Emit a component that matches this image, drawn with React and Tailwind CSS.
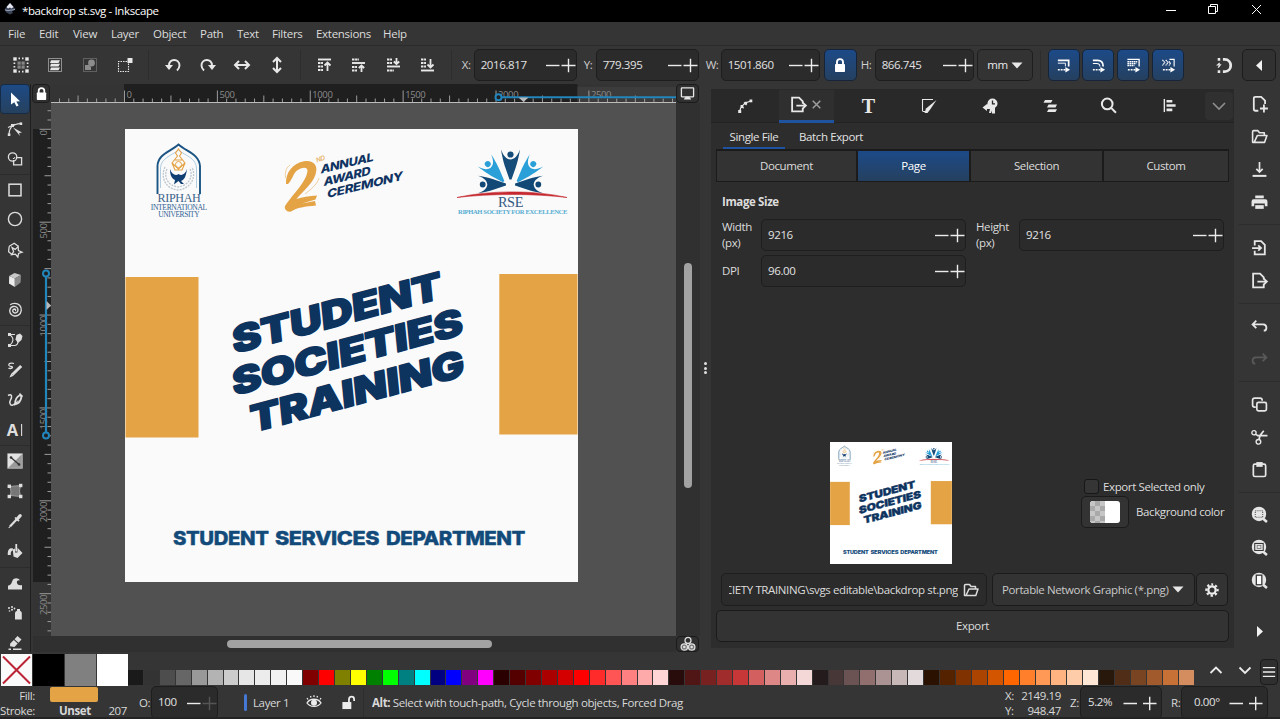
import React from "react";

/* ---------- icon helper ---------- */
function G({ s = 16, w = 1.5, className = "", children }) {
  return (
    <svg width={s} height={s} viewBox="0 0 16 16" fill="none" stroke="currentColor" strokeWidth={w} className={"shrink-0 overflow-visible " + className}>
      {children}
    </svg>
  );
}
const F = { fill: "currentColor", stroke: "none" };

/* ---------- toolbox icons ---------- */
const tools = {
  select: <G><path {...F} d="M4 1.500 13 10.200 9.300 10.400 11.600 14.600 9.500 15.600 7.300 11.300 4 13.600z" /></G>,
  node: <G w={1.1}><path d="M2 13.500C2 7 5 3 13.500 2.500M1 6.500 8 3.200" /><rect x="4" y="3" width="3" height="3" {...F} /><rect x="12.600" y="1.400" width="2.600" height="2.600" {...F} /><rect x=".8" y="12.400" width="2.600" height="2.600" {...F} /><path {...F} d="M6 6.500 15 11.500 12 12 13 15z" /></G>,
  shapes: <G w={1.3}><circle cx="5.600" cy="6" r="4.200" /><path d="M9.800 6.600H14.600V13.800H6.600V10" /><path strokeDasharray="1 1" d="M6.600 10V6.600H9.800" /></G>,
  rect: <G w={1.500}><rect x="2" y="2.200" width="12" height="11.600" /></G>,
  circle: <G w={1.400}><circle cx="8" cy="8" r="6.600" /></G>,
  star: <G w={1.300}><path d="M2.200 4.200 7.200 1.200 11.600 4.600M2.200 4.200 1.600 9.800 5.600 13M5 5.500 8.200 7.400 11.200 4.600 11.400 8.600 15 10.200 11.600 11.400 10.800 15 8.400 12.200 4.600 12.600 6.600 9.600z" /></G>,
  box: <G><path fill="#ececec" stroke="none" d="M2.200 4 7.800 6.400V15L2 11.600z" /><path fill="#c8c8c8" stroke="none" d="M7.500 1 14 3 7.800 6.400 2.200 4z" /><path fill="#8a8a8a" stroke="none" d="M14 3 13.600 10.500 7.800 15V6.400z" /></G>,
  spiral: <G w={1.400}><path d="M8 8.600c.8 0 1-1.500-.4-1.600C5.600 7 5.200 9.200 6.400 10.300 8.200 11.900 11 10.600 11 8 11 5.200 8.400 3.900 6 4.500 3.200 5.200 2 8.400 3.200 11 4.600 14 8.400 14.900 11.400 13.200 14.800 11.200 15.200 6 12.600 3.300 10 .8 5.600.8 3.200 2.800" /></G>,
  pencilPath: <G w={1.100}><path d="M2.500 2.500H8M2.500 2.500C8 6 6 11 2.500 13.500H8C11 13 11 11 11 9" /><rect x="1" y="1" width="3" height="3" {...F} /><rect x="1" y="12" width="3" height="3" {...F} /><path {...F} d="M9.500 3 13 1.500 15.500 4 14.500 8 11 11 8.500 7.500z" /></G>,
  pencil: <G w={1.300}><path d="M7 1.500C4 .5 1 1.500 2 3.500 3 5 5.500 4 5.500 5.500 5 7 2 6.500 1.500 6" /><path d="M5.500 12.500 14.200 4" strokeWidth="3" /><path {...F} d="M4.300 11.300 6.700 13.700 2.500 15.500z" /></G>,
  calligraphy: <G w={1.500}><path d="M1 3.500C3.500 2 5 3 4.500 5.500 4 8 2 9 3 11.500 4 14.500 6.500 13 8 11.500" /><path d="M8 12.500C8 8 10 4.500 13 3L14.500 4.500C14 8 12 11.500 8 12.500z" strokeWidth="1.800" /><path d="M8 12.500 11 8.500" strokeWidth="1" /><path d="M12.500 1.500 15.500 4.500" strokeWidth="1.600" /></G>,
  text: <G><path d="M14.600 2V14" strokeWidth="1.100" /><text x="-.2" y="13.700" fontSize="16.500" fontWeight="700" fontFamily="Open Sans, sans-serif" {...F}>A</text></G>,
  gradient: <G w={1}><rect x=".8" y=".8" width="14.400" height="14.400" fill="#9a9a9a" stroke="#b5b5b5" /><path fill="#e2e2e2" stroke="none" d="M1 1H15L1 15z" /><path stroke="#333" strokeWidth="1.300" d="M4 4.500 12 11.500" /><circle cx="4" cy="4.500" r="1.300" fill="#333" stroke="none" /><circle cx="12" cy="11.500" r="1.300" fill="#333" stroke="none" /></G>,
  mesh: <G w={1}><path fill="#777" d="M2.500 3.500 13.500 2.500 12.500 8 13.500 13.500 3.500 12.500 4 8z" stroke="#9a9a9a" /><g {...F}><rect x=".6" y="1.600" width="3.400" height="3.400" /><rect x="12" y=".8" width="3.400" height="3.400" /><rect x="12" y="11.800" width="3.400" height="3.400" /><rect x=".6" y="11.800" width="3.400" height="3.400" /></g></G>,
  dropper: <G w={2}><path d="M3 13.500 9.500 6.500" strokeWidth="2.200" /><path d="M8 4.500 12 8.200" strokeWidth="1.600" /><path d="M10.200 6 13.200 2.600" strokeWidth="3.200" strokeLinecap="round" /><path d="M1.800 15 3 13.500" strokeWidth="1.200" /></G>,
  bucket: <G w={1.300}><path {...F} d="M5.800 6.500 8 5.500V9.500H10.500V4.800L15.500 10 10.500 15 6.500 13.500z" /><path d="M9.250 8.500V1" strokeWidth="1.800" /><path {...F} d="M6 5.500C2.500 4.500.5 6.500.8 12H3.800C3.500 9.500 4 8 5.800 7.500z" /></G>,
  tweak: <G><path {...F} d="M1 14.500V10.500C4 10.500 4.500 8 5.500 5.500 6.800 2.800 11 2.300 13.200 5.500 11 4.800 9.400 6 10 8 10.500 10 12.500 10.500 15 10V14.500z" /></G>,
  spray: <G><g {...F}><path d="M8 8Q8 6.500 10 5.800V4H13V5.800Q14.800 6.500 14.800 8V14.500H8z" /><circle cx="2" cy="3" r="1" /><circle cx="5" cy="2" r="1" /><circle cx="5" cy="4.800" r="1" /><circle cx="2.500" cy="6" r=".8" /><circle cx="7.500" cy="3.500" r=".9" /></g></G>,
  eraser: <G w={1.200}><path {...F} d="M10.500 1 14.500 4.500 11.500 7.800 7.500 4.200zM6.800 5 10.700 8.600 7.500 12 3 11.200 3.200 8.500z" /><path d="M1.500 14.200H4M6 14.200H14.500" strokeWidth="1.500" /></G>,
};
const toolGroups = [
  ["select", "node", "shapes"],
  ["rect", "circle", "star", "box", "spiral"],
  ["pencilPath", "pencil", "calligraphy", "text"],
  ["gradient", "mesh", "dropper", "bucket"],
  ["tweak", "spray", "eraser"],
];

function Toolbox() {
  return (
    <div className="flex h-[568px] w-[31px] shrink-0 flex-col border-r border-[#1f1f1f] text-[#dedede]">
      {toolGroups.map((g, i) => (
        <div key={i} className={i > 2 ? "border-t border-[#2c2c2c]" : ""}>
          {g.map((t, j) => (
            <div
              key={t}
              className={
                "flex h-[30.1px] items-center justify-center " +
                (t === "select" ? "rounded-[4px] border border-[#152c49] bg-gradient-to-b from-[#1d4a85] to-[#26415f] text-white" : j === 0 && i < 3 ? "border-t border-[#2c2c2c]" : "")
              }
            >
              {tools[t]}
            </div>
          ))}
        </div>
      ))}
    </div>
  );
}

/* ---------- top tool controls ---------- */
function Spin({ value, cls, faded }) {
  return (
    <div className={"flex shrink-0 items-center rounded-[5px] border border-[#1e1e1e] bg-[#2b2b2b] text-[#e2e2e2] " + cls}>
      <span className="flex-1 whitespace-nowrap pb-px pl-[6px]">{value}</span>
      <svg width="31" height="16" viewBox="0 0 31 16" stroke="#ececec" strokeWidth="1.400" className="shrink-0">
        <path d="M1 8.500H14.500" />
        <path d="M16.500 8.500H30.500M23.500 1.800V15.200" stroke={faded ? "#555" : "#ececec"} />
      </svg>
    </div>
  );
}
function WideSpin({ value, cls }) {
  return (
    <div className={"flex shrink-0 items-center rounded-[5px] border border-[#1e1e1e] bg-[#2b2b2b] pr-[3px] text-[#e2e2e2] " + cls}>
      <span className="flex-1 whitespace-nowrap pb-px pl-[7px]">{value}</span>
      <svg width="36" height="16" viewBox="0 0 36 16" stroke="#ececec" strokeWidth="1.400" className="shrink-0">
        <path d="M1.500 8.500H15M21 8.500H34.500M27.700 1.800V15.200" />
      </svg>
    </div>
  );
}
function Sep({ cls }) {
  return <div className={"h-[30px] w-px shrink-0 bg-[#2d2d2d] " + cls} />;
}
function Cell({ cls = "w-[34.6px]", children }) {
  return <div className={"flex shrink-0 items-center justify-center " + cls}>{children}</div>;
}
const Lines = ({ y, dash }) => <path strokeWidth="1.900" strokeDasharray={dash} d={y} />;

function BlueBtn({ children, cls = "w-[32px]" }) {
  return (
    <div className={"flex h-[32px] shrink-0 items-center justify-center rounded-[5px] border border-[#16243a] bg-gradient-to-b from-[#1c4a88] to-[#25405f] text-white " + cls}>
      {children}
    </div>
  );
}
const LockShape = ({ s = 16 }) => (
  <G s={s} w={1.900}><path d="M5 8V5C5 1.200 11 1.200 11 5V8" /><rect x="3" y="7" width="10" height="8" rx=".8" {...F} /></G>
);

function ToolControls() {
  return (
    <div className="flex h-[39px] shrink-0 items-center border-t border-[#2b2b2b] pl-[3.500px] text-[#e8e8e8]">
      <Cell><G w={1.600}><g strokeWidth="1.700"><path d="M5.500 1.400H7M9 1.400H10.500M5.500 14.600H7M9 14.600H10.500M1.400 5.500V7M1.400 9V10.500M14.600 5.500V7M14.600 9V10.500" /></g><g {...F}><rect x=".3" y=".3" width="3.400" height="3.400" /><rect x="12.300" y=".3" width="3.400" height="3.400" /><rect x=".3" y="12.300" width="3.400" height="3.400" /><rect x="12.300" y="12.300" width="3.400" height="3.400" /></g><g fill="#858585" stroke="none"><rect x="4.500" y="4.500" width="3.200" height="3.200" /><rect x="8.500" y="4.500" width="3.200" height="3.200" /><rect x="4.500" y="8.500" width="3.200" height="3.200" /><rect x="8.500" y="8.500" width="3.200" height="3.200" /></g></G></Cell>
      <Cell><G w={1}><rect x="1.500" y="1.500" width="13" height="13" strokeDasharray="1 1" /><path {...F} d="M4 3.200H13L11.500 6H3zM4 6.800H13L11.500 9.600H3zM4 10.400H13L11.500 13.200H3z" /></G></Cell>
      <Cell><G w={1} className="text-[#8c8c8c]"><rect x="1.500" y="1.500" width="13" height="13" strokeDasharray="1 1" /><circle cx="9.500" cy="6" r="3.400" {...F} /><path {...F} d="M3 8H7L9 10V13H3z" /></G></Cell>
      <Cell><G w={1.100}><path d="M10 4.500H1.500V14.500H11.500V6" strokeDasharray="1.500 1" /><rect x="10.500" y="1" width="5" height="5" {...F} /></G></Cell>
      <Sep cls="ml-[6px] mr-[7px]" />
      <Cell><G w={1.900}><path d="M4 8.500C4 .8 14.500 1.500 14.500 8.500 14.500 11 13 12.500 12 13.500" /><path {...F} d="M0 8H8L4 13z" /></G></Cell>
      <Cell><G w={1.900}><path d="M12 8.500C12 .8 1.500 1.500 1.500 8.500 1.500 11 3 12.500 4 13.500" /><path {...F} d="M16 8H8L12 13z" /></G></Cell>
      <Cell><G w={2}><path d="M2 8H14M5 4 1 8 5 12M11 4 15 8 11 12" /></G></Cell>
      <Cell><G w={2}><path d="M8 2V14M4 5 8 1 12 5M4 11 8 15 12 11" /></G></Cell>
      <Sep cls="ml-[6px] mr-[5px]" />
      <Cell><G><Lines y="M2 2.500H15" /><Lines y="M2 6H7M2 9.500H7M2 13H7" dash="2.500 .6" /><path d="M11.500 14V6M8.500 8.500 11.500 5.500 14.500 8.500" strokeWidth="1.800" /></G></Cell>
      <Cell><G><Lines y="M2 2.500H9M2 10H7M2 13.500H7" dash="2.500 .6" /><Lines y="M2 6H15" /><path d="M11.500 15V9M8.800 11 11.500 8.500 14.200 11" strokeWidth="1.800" /></G></Cell>
      <Cell><G><Lines y="M2 2.500H7M2 6H7M2 13.500H9" dash="2.500 .6" /><Lines y="M2 9.500H15" /><path d="M11.500 1V7M8.800 4.500 11.500 7 14.200 4.500" strokeWidth="1.800" /></G></Cell>
      <Cell><G><Lines y="M2 2.500H7M2 6H7M2 9.500H7" dash="2.500 .6" /><Lines y="M2 13.500H15" /><path d="M11.500 2V10M8.500 7.500 11.500 10.500 14.500 7.500" strokeWidth="1.800" /></G></Cell>
      <Sep cls="ml-[6px] mr-[10px]" />
      <span className="w-[12px] shrink-0 pb-px text-[#cfcfcf]">X:</span>
      <Spin cls="h-[32px] w-[103px]" value="2016.817" />
      <span className="ml-[7px] w-[12px] shrink-0 pb-px text-[#cfcfcf]">Y:</span>
      <Spin cls="h-[32px] w-[103px]" value="779.395" />
      <span className="ml-[7px] w-[15px] shrink-0 pb-px text-[#cfcfcf]">W:</span>
      <Spin cls="h-[32px] w-[99px]" value="1501.860" />
      <BlueBtn cls="ml-[4px] w-[33px]"><LockShape /></BlueBtn>
      <span className="ml-[4px] w-[14px] shrink-0 pb-px text-[#cfcfcf]">H:</span>
      <Spin cls="h-[32px] w-[99px]" value="866.745" />
      <div className="ml-[3px] flex h-[32px] w-[56px] shrink-0 items-center justify-center gap-[3px] rounded-[5px] border border-[#1e1e1e] bg-[#333] pl-px">
        <span className="pb-px">mm</span>
        <svg width="12" height="7"><path d="M.5.5H11.500L6 6.500z" fill="#e8e8e8" /></svg>
      </div>
      <Sep cls="ml-[7px] mr-[7px]" />
      <div className="flex gap-[2.800px]">
        <BlueBtn><G s={15} w={1.800}><path d="M2 2.500H13.500V9" /><path d="M2 5.500H10V9" strokeWidth="1" /><path d="M2 12.500H11" strokeDasharray="2 1" /><path {...F} d="M10 9.500 15 12.500 10 15.500z" /></G></BlueBtn>
        <BlueBtn><G s={15} w={1.800}><path d="M2 2.500H7C11 2.500 13 5 13 9" /><path d="M2 5.800H6C8 5.800 9.500 7 9.500 9" strokeWidth="1.200" /><path d="M2 12.500H11" strokeDasharray="2 1" /><path {...F} d="M10 9.500 15 12.500 10 15.500z" /></G></BlueBtn>
        <BlueBtn><G s={15} w={1.400}><path d="M1.500 1.500H14V9" /><path d="M1.500 4H12M1.500 6H11M1.500 8H9" strokeDasharray="1.800 .5" /><path d="M2 12.500H11" strokeDasharray="2 1" strokeWidth="1.800" /><path {...F} d="M10 9.500 15 12.500 10 15.500z" /></G></BlueBtn>
        <BlueBtn><G s={15} w={1.200}><path d="M9 1.500H14V9" /><path d="M1.500 2 4 4.800 1.500 8M5 2 7.500 4.800 5 8M8.500 3.500 10 5.500 8.500 8" strokeDasharray="1.800 .4" /><path d="M2 12.500H11" strokeDasharray="2 1" strokeWidth="1.800" /><path {...F} d="M10 9.500 15 12.500 10 15.500z" /></G></BlueBtn>
      </div>
      <div className="ml-[32px] flex w-[16px] shrink-0 items-center"><G s={17} w={2.600}><path d="M6.500 2.300H8C15.800 2.300 15.800 13.700 8 13.700H6.500" /><path d="M4 2.300H1.600M4 13.700H1.600" /><path d="M3.500 5.500 1.500 7.500H4L2 10" strokeWidth="1.200" /></G></div>
      <div className="ml-[10px] flex h-[32px] w-[34px] shrink-0 items-center justify-center rounded-[5px] border border-[#1c1c1c] bg-[#313131]">
        <svg width="6" height="11"><path d="M6 0V11L0 5.500z" fill="#f2f2f2" /></svg>
      </div>
    </div>
  );
}

/* ---------- artwork ---------- */
function Figure({ x, y, r, c, k = 1 }) {
  return (
    <g transform={`translate(${x} ${y}) rotate(${r}) scale(${k})`} fill={c}>
      <circle cx="0" cy="-24" r="3.100" />
      <path d="M-9.500 -29C-6.500 -21 -3.500 -19.500 0 -19 3.500 -19.500 6.500 -21 9.500 -29 8 -20 6.500 -15 5.200 -11L1 1H-1L-5.200 -11C-6.500 -15 -8 -20 -9.500 -29z" />
    </g>
  );
}
function Artwork({ size, bg = "#fafafa" }) {
  return (
    <svg width={size} height={size} viewBox="125 129 453 453" className="block">
      <rect x="125" y="129" width="453" height="453" fill={bg} />
      <rect x="125.500" y="277" width="73" height="160.500" fill="#e4a345" />
      <rect x="499.300" y="274" width="78.200" height="160.500" fill="#e4a345" />
      {/* Riphah crest */}
      <g fill="none">
        <path d="M157.500 194V166C158 154 170 152 178.500 144.500 187 152 199 154 200 166V194" stroke="#1c5583" strokeWidth="1.900" />
        <path d="M160.500 188V168C161 158 171 156 178.500 150 186 156 196 158 196.500 168V188" stroke="#7fb0d0" strokeWidth=".6" />
        <path d="M165 167C160 178 166 189 178 190 190 189 197 178 192 167M167 169C163 178 169 186 178 187 187 186 194 178 190 169" stroke="#bcc6cf" strokeWidth="1.300" strokeDasharray="2 1" />
        <path d="M178.500 149 181.500 153 179.500 156 185 163 182 170H175L172 163 177.500 156 175.500 153zM175 160H182M172 163 178.500 169 185 163" stroke="#e4a345" strokeWidth="1.100" />
        <circle cx="178.500" cy="164.500" r="3" stroke="#e4a345" strokeWidth="1" />
      </g>
      <path d="M170 169C172 175 176 176 178.500 174 181 176 185 175 187 169 186 177 184 180 181 181L184 184H181L178.500 181 174 184.500 175 180C171 178 170 174 170 169z" fill="#123f73" />
      <g fontFamily="Liberation Serif, serif" fill="#41658c" textAnchor="middle">
        <text x="179" y="202" fontSize="12.500" textLength="43" lengthAdjust="spacingAndGlyphs">RIPHAH</text>
        <text x="178.800" y="209.800" fontSize="8" textLength="56" lengthAdjust="spacingAndGlyphs" fill="#2f6193">INTERNATIONAL</text>
        <text x="178.800" y="216.800" fontSize="8" textLength="41" lengthAdjust="spacingAndGlyphs" fill="#2f6193">UNIVERSITY</text>
      </g>
      {/* award mark */}
      <path d="M286 184C285.500 172 293 163.500 304 161.300 314 160 318.500 166 315.500 174.500 312.500 184 303 191 296.500 199 302 197 309 196.200 317 195.500L315.500 199.500 302 203.500 315 201 316 205.500C305 206.500 297 207.500 291 211.500 287 212.500 284 209 285 206 293 194 307 181 307.500 170.500 307.300 166 301 167.500 297 170.500 292.500 174.500 293 179 288 184z" fill="#e4a345" />
      <path d="M319 178C317 185 310 190 305 194M285.500 178C284.500 171 287 167 290 165" stroke="#ecc389" strokeWidth=".8" fill="none" />
      <text transform="translate(317 162.500) rotate(-20)" fontSize="6.500" fontWeight="600" fontStyle="italic" fontFamily="Inter, sans-serif" fill="#e8b266">ND</text>
      <g fontFamily="Inter, sans-serif" fontWeight="800" fontStyle="italic" fontSize="11.600" fill="#103462">
        <text transform="matrix(.972 -.235 .1 .98 321 173.500)" textLength="54" lengthAdjust="spacingAndGlyphs">ANNUAL</text>
        <text transform="matrix(.972 -.235 .1 .98 324 186)" textLength="48" lengthAdjust="spacingAndGlyphs">AWARD</text>
        <text transform="matrix(.972 -.235 .1 .98 327.500 198)" textLength="77.500" lengthAdjust="spacingAndGlyphs">CEREMONY</text>
      </g>
      {/* RSE mark */}
      <Figure x="510.500" y="178.500" r={0} c="#154c79" />
      <Figure x="503" y="181" r={-42} c="#2a9fd8" k={0.95} />
      <Figure x="518" y="181" r={42} c="#2a9fd8" k={0.95} />
      <Figure x="505" y="184.500" r={-90} c="#124876" k={0.93} />
      <Figure x="516" y="184.500" r={90} c="#124876" k={0.93} />
      <path d="M457 197.500C490 190 535 190 567 197.500 535 193.500 490 193.500 457 197.500z" fill="#c5282f" stroke="#c5282f" strokeWidth=".6" />
      <g fontFamily="Liberation Serif, serif" textAnchor="middle">
        <text x="510.500" y="206.500" fontSize="14" textLength="25" lengthAdjust="spacingAndGlyphs" fill="#33587f">RSE</text>
        <text x="512.500" y="214.200" fontSize="6.600" fontWeight="700" textLength="109" lengthAdjust="spacingAndGlyphs" fill="#58add3">RIPHAH SOCIETY FOR EXCELLENCE</text>
      </g>
      {/* headline */}
      <g fontFamily="Inter, sans-serif" fontWeight="900" fontSize="37" fill="#0d335f" stroke="#0d335f" strokeWidth="1.400" strokeLinejoin="round">
        <text transform="matrix(.966 -.259 .1 1 233.500 354)" textLength="216" lengthAdjust="spacingAndGlyphs">STUDENT</text>
        <text transform="matrix(.966 -.259 .1 1 233.500 396)" textLength="238" lengthAdjust="spacingAndGlyphs">SOCIETIES</text>
        <text transform="matrix(.966 -.259 .1 1 251.500 433)" textLength="221" lengthAdjust="spacingAndGlyphs">TRAINING</text>
      </g>
      <g fontFamily="Inter, sans-serif" fontWeight="800" fontSize="18.800" fill="#124a7a" stroke="#124a7a" strokeWidth=".4">
        <text x="173" y="545" textLength="95.500" lengthAdjust="spacingAndGlyphs">STUDENT</text>
        <text x="275" y="545" textLength="104" lengthAdjust="spacingAndGlyphs">SERVICES</text>
        <text x="386" y="545" textLength="139" lengthAdjust="spacingAndGlyphs">DEPARTMENT</text>
      </g>
    </svg>
  );
}

/* ---------- rulers ---------- */
const STEP = 9.288;
function HRuler() {
  const ticks = [];
  for (let i = -8; i <= 59; i++) {
    const x = 73.500 + i * STEP;
    if (x > 625 || x < 1) continue;
    const h = i % 10 === 0 ? 12 : i % 5 === 0 ? 7 : 4;
    ticks.push(<path key={i} d={`M${x} ${18.500 - h}V18.500`} />);
  }
  return (
    <svg width="625" height="19" viewBox="0 0 625 19" className="block">
      <rect width="625" height="19" fill="#343434" />
      <rect x="73" width="453.500" height="19" fill="#1f1f1f" />
      <rect x="526.500" y="3" width="99" height="15" fill="#3c3c3c" />
      <g stroke="#9c9c9c">{ticks}<path d="M0 18.500H625" stroke="#bdbdbd" /></g>
      <g fill="#8b8b8b" fontSize="9.500" fontFamily="Open Sans, sans-serif">
        {[0, 500, 1000, 1500, 2000, 2500].map((n, i) => <text key={n} x={75.500 + i * 92.880} y="13.500">{n}</text>)}
      </g>
      <path d="M449 13.300H625" stroke="#2285bb" strokeWidth="2" />
      <circle cx="447.500" cy="13.300" r="3" stroke="#2285bb" strokeWidth="2" fill="#1f1f1f" />
      <path d="M467.500 13.500H477.500L472.500 18z" fill="#b9b9b9" />
    </svg>
  );
}
function VRuler() {
  const ticks = [];
  for (let i = -2; i <= 54; i++) {
    const y = 26.300 + i * STEP;
    if (y > 532) continue;
    const h = i % 10 === 0 ? 12 : i % 5 === 0 ? 7 : 4;
    ticks.push(<path key={i} d={`M${18.500 - h} ${y}H18.500`} />);
  }
  return (
    <svg width="19" height="533" viewBox="0 0 19 533" className="block">
      <rect width="19" height="533" fill="#343434" />
      <rect y="26" width="19" height="453" fill="#1f1f1f" />
      <g stroke="#9c9c9c">{ticks}<path d="M18.500 0V533" stroke="#bdbdbd" /></g>
      <g fill="#8b8b8b" fontSize="9.500" fontFamily="Open Sans, sans-serif" textAnchor="end">
        {[0, 500, 1000, 1500, 2000, 2500].map((n, i) => (
          <text key={n} transform={`translate(13.500 ${27.500 + i * 92.880}) rotate(-90)`}>{n}</text>
        ))}
      </g>
      <path d="M13 173V330" stroke="#2285bb" strokeWidth="2.200" />
      <circle cx="13" cy="170.500" r="3" stroke="#2285bb" strokeWidth="2" fill="#1f1f1f" />
      <circle cx="13" cy="332.500" r="3" stroke="#2285bb" strokeWidth="2" fill="#1f1f1f" />
      <path d="M13.500 198V207L18 202.500z" fill="#b9b9b9" />
    </svg>
  );
}

function CanvasArea() {
  return (
    <div className="ml-[2px] grid h-[568px] w-[667px] shrink-0 grid-cols-[18px_625px_24px] grid-rows-[19px_533px_16px]">
      <div className="-ml-px mr-px flex items-center justify-center rounded-[4px] border border-[#1c1c1c] bg-[#303030] text-white"><LockShape s={15} /></div>
      <HRuler />
      <div className="mr-px flex items-center justify-center rounded-[4px] border border-[#1b1b1b] bg-[#303030] text-[#e6e6e6]">
        <G s={15} w={1.400}><rect x="1.500" y="2" width="13" height="9.500" rx=".5" /><path {...F} d="M6 11.500H10L12 14.500H4z" /></G>
      </div>
      <VRuler />
      <div className="flex bg-[#515151] pl-[74px] pt-[26px]"><Artwork size={453} /></div>
      <div className="flex justify-center bg-[#303030] pr-px pt-[160px]"><div className="h-[225px] w-[8px] rounded-full bg-[#a2a2a2]" /></div>
      <div className="col-span-2 flex items-center bg-[#303030] pl-[194px]"><div className="h-[8px] w-[265px] rounded-full bg-[#a2a2a2]" /></div>
      <div className="mr-px flex items-center justify-center rounded-[4px] border border-[#1b1b1b] bg-[#303030] text-[#dedede]">
        <G s={16} w={1.300}><circle cx="8" cy="4.400" r="3" /><circle cx="4.300" cy="11" r="3.200" fill="#777" /><circle cx="11.700" cy="11" r="3.200" fill="#777" /><circle cx="4.300" cy="11" r="1.300" {...F} /><circle cx="11.700" cy="11" r="1.300" {...F} /></G>
      </div>
    </div>
  );
}

/* ---------- export dock ---------- */
const ExportIcon = ({ s = 17 }) => <G s={s} w={1.700}><path d="M9.500 14.500H2V1.500H8.500L12 5V7M12 11V14.500H9" /><path d="M6 9H14M12 6.200 15 9 12 11.800" strokeWidth="1.600" /></G>;
const FolderIcon = ({ s = 17 }) => <G s={s} w={1.500}><path d="M3.500 13.500H1.500V3.500Q1.500 2.500 2.500 2.500H6.500L8 4.500H12.500V6.500M3 13.500 6 7H15L12.800 13.500z" strokeLinejoin="round" /></G>;

function Dock() {
  return (
    <div className="mt-[5px] flex h-[559px] w-[523px] shrink-0 flex-col bg-[#2d2d2d] text-[#dcdcdc]">
      <div className="flex h-[34px] shrink-0 items-center border-b border-[#222] bg-[#292929] text-[#e8e8e8]">
        <Cell cls="w-[68px]"><G s={16} w={1.200}><path d="M2.500 14C3.500 8 6.500 4.500 14 3M3.500 9 7 10M7 4.500 9.500 7" /><g {...F}><rect x="1.200" y="12" width="3" height="3" /><rect x="3.600" y="7" width="2.800" height="2.800" /><rect x="7.500" y="3.800" width="2.600" height="2.600" /><rect x="12.500" y="1.500" width="2.800" height="2.800" /></g></G></Cell>
        <div className="mt-px flex h-[33px] w-[55px] shrink-0 items-center gap-[4px] border-b-[3px] border-[#1f53a0] bg-[#2f2f2f] pl-[11px]">
          <ExportIcon /><G s={11} w={2.200} className="text-[#9d9d9d]"><path d="M2.500 2.500 13.500 13.500M13.500 2.500 2.500 13.500" /></G>
        </div>
        <Cell cls="w-[69px]"><span className="font-['Liberation_Serif',serif] text-[20px] font-bold leading-[26px] tracking-normal">T</span></Cell>
        <Cell cls="w-[52px]"><G s={16} w={1.100}><path d="M1.500 13V1.500H12M1.500 13.500H4" /><path {...F} d="M15.500 2 9.500 11 6.500 15H3.500L5 10.500z" /></G></Cell>
        <Cell cls="w-[69px]"><G s={16}><circle cx="10.500" cy="5.500" r="5" {...F} /><path stroke="#292929" strokeWidth="1.300" d="M10.500 2.500V5.800H13" /><path {...F} d="M5 6 .5 9.500 5 13V11H8L7 15H9L10 12.500V15.500H13V9z" /></G></Cell>
        <Cell cls="w-[51px]"><G s={16}><path {...F} d="M3 2H10.500L9 4.800H1.500zM6.500 6.600H15L13.500 9.400H5zM6.500 11.200H15L13.500 14H5z" /></G></Cell>
        <Cell cls="w-[67px]"><G s={17} w={1.900}><circle cx="6.800" cy="6.500" r="5" /><path d="M10.500 10.200 15 14.800" /></G></Cell>
        <Cell cls="w-[54px]"><G s={15}><path d="M2.500 1V15" /><path {...F} d="M4.800 2H11V4.800H4.800zM4.800 6.600H14.500V9.400H4.800zM4.800 11.200H11V14H4.800z" /></G></Cell>
        <Cell cls="ml-[9px] w-[28px] h-[28px] bg-[#303030] rounded-[4px] text-[#8e8e8e]"><G s={16} w={1.600}><path d="M2 5 8 11 14 5" /></G></Cell>
      </div>

      <div className="flex h-[26px] shrink-0 pl-[12px] text-[#e2e2e2]">
        <div className="flex h-[26px] w-[62px] items-center justify-center border-b-[2px] border-[#1f53a0] pt-[4px]">Single File</div>
        <div className="ml-[14px] flex items-center pt-[2px]">Batch Export</div>
      </div>
      <div className="ml-[5px] flex h-[33px] w-[513px] shrink-0 border border-[#1b1b1b] border-t-2 bg-[#333]">
        <div className="flex w-[141px] items-center justify-center border-r-2 border-[#1b1b1b]">Document</div>
        <div className="flex w-[113px] items-center justify-center border-r-2 border-[#1b1b1b] bg-gradient-to-b from-[#1c4a88] to-[#25405f] text-white">Page</div>
        <div className="flex w-[133px] items-center justify-center border-r-2 border-[#1b1b1b]">Selection</div>
        <div className="flex flex-1 items-center justify-center">Custom</div>
      </div>

      <div className="ml-[11px] mt-[12px] h-[18px] font-bold">Image Size</div>
      <div className="ml-[11px] mt-[6px] flex h-[34px] shrink-0 items-center">
        <span className="w-[39px] leading-[16px]">Width<br />(px)</span>
        <Spin cls="h-[32px] w-[205px]" value="9216" />
        <span className="ml-[10px] w-[43px] leading-[16px]">Height<br />(px)</span>
        <Spin cls="h-[32px] w-[205px]" value="9216" />
      </div>
      <div className="ml-[11px] mt-[3px] flex h-[32px] shrink-0 items-center">
        <span className="w-[39px]">DPI</span>
        <Spin cls="h-[32px] w-[205px]" value="96.00" />
      </div>

      <div className="mt-[155px] flex h-[122px] shrink-0">
        <div className="ml-[119px] h-[122px] w-[122px]"><Artwork size={122} bg="#ffffff" /></div>
        <div className="ml-[129px] mt-[36px] flex flex-col">
          <div className="flex h-[17px] items-center pl-[3px]">
            <div className="h-[15px] w-[15px] rounded-[3px] border border-[#171717] bg-[#353535]" />
            <span className="ml-[4px]">Export Selected only</span>
          </div>
          <div className="mt-px flex h-[32px] items-center">
            <div className="flex h-[32px] w-[48px] items-center justify-center rounded-[5px] border border-[#1b1b1b] bg-[#333]">
              <svg width="30" height="22" className="rounded-[3px]">
                <rect width="30" height="22" fill="#fff" />
                <rect width="15" height="22" fill="#c6c6c6" />
                <path fill="#a9a9a9" d="M0 5H5V10H0zM5 0H10V5H5zM10 5H15V10H10zM5 10H10V15H5zM0 15H5V20H0zM10 15H15V20H10zM5 20H10V22H5z" />
              </svg>
            </div>
            <span className="ml-[7px]">Background color</span>
          </div>
        </div>
      </div>

      <div className="ml-[10px] mt-[9px] flex h-[33px] shrink-0">
        <div className="flex w-[266px] items-center rounded-[5px] border border-[#1e1e1e] bg-[#2b2b2b] pl-[7px]">
          <span className="flex h-[18px] w-[229px] items-center justify-end overflow-hidden whitespace-nowrap">CIETY TRAINING\svgs editable\backdrop st.png</span>
          <span className="ml-[5px]"><FolderIcon s={16} /></span>
        </div>
        <div className="ml-[5px] flex w-[203px] items-center rounded-[5px] border border-[#1b1b1b] bg-[#333] pl-[9px]">
          <span className="w-[166px] whitespace-nowrap text-[#c9c9c9]">Portable Network Graphic (*.png)</span>
          <svg width="12" height="7" className="ml-[4px]"><path d="M.5.5H11.500L6 6.500z" fill="#e8e8e8" /></svg>
        </div>
        <div className="ml-px flex w-[32px] items-center justify-center rounded-[5px] border border-[#1b1b1b] bg-[#333] text-[#ececec]">
          <G s={14} w={2}><circle cx="8" cy="8" r="4.200" strokeWidth="2.600" /><path strokeWidth="2.600" strokeDasharray="2.600 2.430" strokeDashoffset="1.300" d="M8 1.600A6.400 6.400 0 1 1 7.990 1.600" /></G>
        </div>
      </div>
      <div className="ml-[5px] mt-[4px] flex h-[32px] w-[513px] shrink-0 items-center justify-center rounded-[5px] border border-[#1b1b1b] bg-[#333]">Export</div>
    </div>
  );
}

/* ---------- command bar ---------- */
const ZoomBase = ({ children }) => (
  <G s={17}><circle cx="7.500" cy="7.500" r="6.800" {...F} /><path d="M11.500 12 15 15" strokeWidth="2.400" />{children}</G>
);
const commandGroups = [
  [
    <G s={18} w={1.600}><path d="M6.500 14H4Q2.500 14 2.500 12.500V3Q2.500 1.700 4 1.700H9L12.500 5V8" /><path d="M11.500 8.500V15.500M8 12H15" /></G>,
    <FolderIcon s={17} />,
    <G s={17} w={1.600}><path d="M8 1V10M5 7.500 8 10.500 11 7.500" /><path d="M1.500 14H14.500" strokeWidth="1.900" /></G>,
    <G s={17}><path {...F} d="M4 1.500H12V4H4zM2.500 5H13.500Q15.500 5 15.500 7V11.500H13V9H3V11.500H.5V7Q.5 5 2.500 5z" /><path {...F} d="M4 10.500H12V14H4z" /></G>,
  ],
  [
    <G s={17} w={1.700}><path d="M3.500 6V2H9.500L13 5.500V14.500H3.500V11" /><path d="M1 8.500H9M6.800 6 9.500 8.500 6.800 11" strokeWidth="1.600" /></G>,
    <ExportIcon s={17} />,
  ],
  [
    <G s={17} w={1.700}><path d="M5 3.500 1.500 7 5 10.500M1.500 7H11.500Q14.500 7.200 14.500 10T12 12.800" /></G>,
    <G s={17} w={1.700} className="text-[#595959]"><path d="M11 3.500 14.500 7 11 10.500M14.500 7H4.500Q1.500 7.200 1.500 10T4 12.800" /></G>,
  ],
  [
    <G s={17} w={1.600}><path d="M4.500 10.500H3.500Q1.500 10.500 1.500 8.500V4Q1.500 2 3.500 2H8.500Q10.500 2 10.500 4V4.500" /><rect x="5.500" y="6" width="9" height="8" rx="1.500" /></G>,
    <G s={17} w={1.300}><circle cx="2.800" cy="4.500" r="2" /><circle cx="7" cy="13" r="2.200" /><path d="M4.500 6 6.500 7.200H15.500M7.500 11 8.500 7 12 2.500" strokeWidth="1.600" /></G>,
    <G s={17} w={1.600}><rect x="2.200" y="3" width="11.600" height="11.600" rx="1.500" /><path {...F} d="M5 1H11V5.500H5z" /></G>,
  ],
  [
    <ZoomBase><rect x="4" y="4.500" width="7" height="6" stroke="#555" strokeWidth="1" strokeDasharray="1 1" /></ZoomBase>,
    <ZoomBase><rect x="3.500" y="4.200" width="8" height="6.600" stroke="#353535" strokeWidth="1" /><rect x="5.800" y="6" width="3.500" height="3" stroke="#777" strokeWidth=".8" /></ZoomBase>,
    <ZoomBase><rect x="5" y="3" width="5.200" height="9" stroke="#353535" strokeWidth="1.200" fill="#fff" /></ZoomBase>,
  ],
];
function CommandBar() {
  return (
    <div className="flex h-[568px] flex-1 flex-col pl-[5px] pt-[4px] text-[#e6e6e6]">
      {commandGroups.map((group, i) => (
        <div key={i} className={i ? "mt-[6px] border-t border-[#2c2c2c] pt-[6px]" : ""}>
          {group.map((icon, j) => (
            <div key={j} className="flex h-[32.600px] items-center justify-center">{icon}</div>
          ))}
        </div>
      ))}
      <div className="mt-[30px] flex justify-center"><svg width="6" height="11"><path d="M0 0V11L6 5.500z" fill="#f2f2f2" /></svg></div>
    </div>
  );
}

/* ---------- palette and status ---------- */
const palette = (
  "1a1a1a 333333 4d4d4d 666666 999999 b3b3b3 cccccc e6e6e6 ececec f2f2f2 f9f9f9 800000 ff0000 808000 ffff00 008000 00ff00 008080 00ffff 000080 0000ff 800080 ff00ff " +
  "2b0000 550000 800000 aa0000 d40000 ff0000 ff2a2a ff5555 ff8080 ffaaaa ffd5d5 280b0b 501616 782121 a02c2c c83737 d35f5f de8787 e9afaf f4d7d7 " +
  "241c1c 483737 6c5353 916f6f ac9393 c8b7b7 e3dbdb 2b1100 552200 803300 aa4400 d45500 ff6600 ff7f2a ff9955 ffb380 ffccaa ffe6d5 28170b 502d16 784421 a05a2c c87137 d38d5f"
).split(" ");

function Palette() {
  return (
    <div className="flex h-[34px] shrink-0 items-end pl-px">
      <div className="flex h-[32px] gap-px">
        <svg width="31" height="32"><rect width="31" height="32" fill="#fafafa" /><path d="M2 2.500 29 29.500M29 2.500 2 29.500" stroke="#bb2336" strokeWidth="2" /></svg>
        <div className="w-[31px] bg-black" />
        <div className="w-[31px] bg-[#808080]" />
        <div className="w-[31px] bg-white" />
      </div>
      <div className="mb-px flex h-[15px] w-[1067px] shrink-0">
        {palette.map((c, i) => (
          <div key={i} className="flex-1 pr-px"><div className="h-full" style={{ backgroundColor: "#" + c }} /></div>
        ))}
      </div>
      <div className="flex h-[32px] flex-1 items-center pl-[13px] text-[#ececec]">
        <G s={16} w={1.800}><path d="M2.500 11 8 5.500 13.500 11" /></G>
        <G s={16} w={1.800} className="ml-[13px]"><path d="M2.500 5.500 8 11 13.500 5.500" /></G>
        <div className="ml-[7px] mt-[4px] flex h-[26px] w-[18px] shrink-0 items-center justify-center rounded-[4px] border border-[#1b1b1b] bg-[#2f2f2f]">
          <G s={14} w={1.700}><path d="M1 3H15M1 8H15M1 13H15" /></G>
        </div>
      </div>
    </div>
  );
}

function Status() {
  return (
    <div className="flex h-[33px] shrink-0 items-start overflow-hidden border-b-2 border-[#232323] text-[#d8d8d8]">
      <div className="flex h-[32px] w-[35px] shrink-0 flex-col items-end text-right">
        <span className="h-[16px] leading-[19px]">Fill:</span>
        <span className="h-[16px] leading-[18px]">Stroke:</span>
      </div>
      <div className="ml-[15px] flex w-[77px] shrink-0 flex-col">
        <div className="mt-px h-[15px] w-[48px] rounded-[2px] bg-[#e4a345]" />
        <div className="flex h-[16px] justify-between leading-[18px]"><b className="ml-[9px]">Unset</b><span>207</span></div>
      </div>
      <span className="ml-[12px] w-[13px] shrink-0 leading-[33px]">O:</span>
      <Spin cls="h-[33px] w-[67px] pr-0 -ml-px" value="100" faded />
      <div className="ml-[26px] mt-[8px] h-[17px] w-[3px] shrink-0 rounded-sm bg-[#4478d4]" />
      <span className="ml-[6px] w-[53px] shrink-0 leading-[33px]">Layer 1</span>
      <span className="mt-[8px]"><G s={16} w={1.300} className="text-[#ececec]"><path d="M1 9C4 4 12 4 15 9 12 13.500 4 13.500 1 9z" /><circle cx="8" cy="8.800" r="3" {...F} /><path d="M2 5.500 1 4M5 3.500 4.500 2M8 3V1.300M11 3.500 11.500 2M14 5.500 15 4" /></G></span>
      <span className="ml-[19px] mt-[9px]"><G s={15} w={1.900} className="text-[#ececec]"><path d="M8.500 8V4.500C8.500.8 14 .8 14 4.500V6.500" /><rect x="1.500" y="7.500" width="9.500" height="7.500" {...F} /></G></span>
      <Sep cls="ml-[7px] mr-[8px] mt-[2px]" />
      <span className="w-[633px] shrink-0 whitespace-nowrap leading-[33px]"><b>Alt:</b> Select with touch-path, Cycle through objects, Forced Drag</span>
      <div className="flex h-[32px] w-[56px] shrink-0 flex-col">
        <div className="flex h-[16px] justify-between leading-[19px]"><span>X:</span><span>2149.19</span></div>
        <div className="flex h-[16px] justify-between leading-[18px]"><span>Y:</span><span>948.47</span></div>
      </div>
      <span className="ml-[9px] w-[10px] shrink-0 leading-[33px]">Z:</span>
      <WideSpin cls="h-[33px] w-[82px]" value="5.2%" />
      <span className="ml-[9px] w-[10px] shrink-0 leading-[33px]">R:</span>
      <WideSpin cls="h-[33px] w-[87px] pl-[5px]" value="0.00°" />
    </div>
  );
}

const menus = [
  ["File", "w-[31px]"], ["Edit", "w-[34px]"], ["View", "w-[38px]"], ["Layer", "w-[42px]"], ["Object", "w-[47px]"],
  ["Path", "w-[37px]"], ["Text", "w-[35px]"], ["Filters", "w-[44px]"], ["Extensions", "w-[67px]"], ["Help", "w-[40px]"],
];

export default function App() {
  return (
    <div className="flex h-[719px] w-[1280px] flex-col overflow-hidden bg-[#353535] font-['Open_Sans','Noto_Sans',sans-serif] text-[11.500px] leading-[16px] tracking-[-0.38px] text-[#dcdcdc]">
      <div className="flex h-[22px] shrink-0 items-center bg-black text-white">
        <svg width="12" height="12" viewBox="0 0 12 12" className="mb-[4px] ml-[4px]"><path d="M6 0 11.500 6 8 8.500 9 10 6 11.500 2.500 9.500 .5 6.500z" fill="#3c4558" /><path d="M6 0 9.500 4 7.500 5.500 6 4.500 4 5.500 2.500 4z" fill="#e6e9f2" /><path d="M1 7 4 7.500 8 7 11 6.500" stroke="#9aa3b8" fill="none" /></svg>
        <span className="ml-[6px] whitespace-nowrap">*backdrop st.svg - Inkscape</span>
        <div className="ml-auto flex items-center pb-[3px] pr-[18px]">
          <svg width="10" height="10" stroke="#fff"><path d="M0 5.500H10" /></svg>
          <svg width="11" height="11" stroke="#fff" fill="none" className="ml-[32px]"><path d="M.5 2.500H7.500V9.500H.5zM2.500 2.500V.5H9.500V7.500H7.500" /></svg>
          <svg width="11" height="11" stroke="#fff" className="ml-[32px]"><path d="M1 1 10 10M10 1 1 10" /></svg>
        </div>
      </div>
      <div className="flex h-[23px] shrink-0 items-center pl-[8px] tracking-[-0.28px] text-[#dcdcdc]">
        {menus.map(([m, w]) => <span key={m} className={"shrink-0 whitespace-nowrap " + w}>{m}</span>)}
      </div>
      <ToolControls />
      <div className="flex h-[568px] shrink-0">
        <Toolbox />
        <CanvasArea />
        <div className="mr-px flex w-[10px] shrink-0 flex-col items-center justify-center gap-[1.500px]">
          <div className="h-[3px] w-[3px] rounded-full bg-[#e0e0e0]" />
          <div className="h-[3px] w-[3px] rounded-full bg-[#e0e0e0]" />
          <div className="h-[3px] w-[3px] rounded-full bg-[#e0e0e0]" />
        </div>
        <Dock />
        <CommandBar />
      </div>
      <Palette />
      <Status />
    </div>
  );
}
